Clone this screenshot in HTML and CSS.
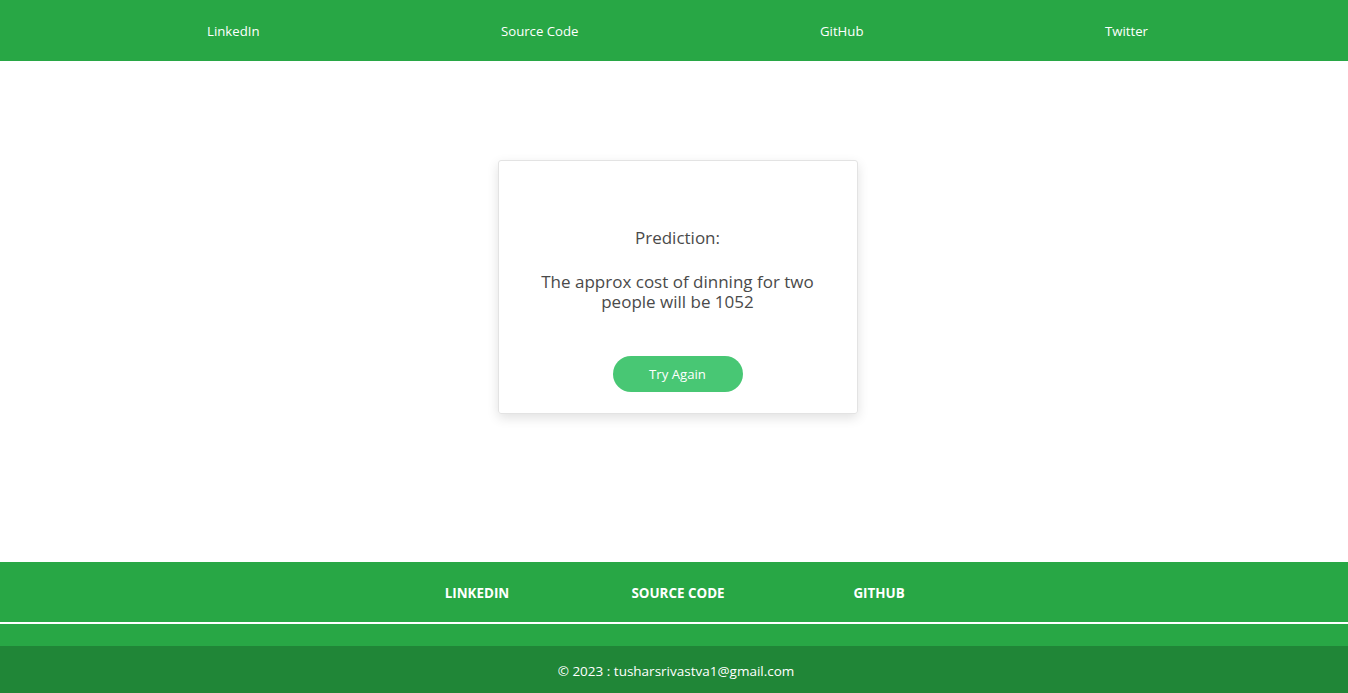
FILE: index.html
```html
<!DOCTYPE html>
<html lang="en">
<head>
<meta charset="utf-8">
<title>Prediction</title>
<link rel="stylesheet" href="styles.css">
</head>
<body>
<header class="topbar">
  <nav class="topnav">
    <a href="#" class="topnav-link">LinkedIn</a>
    <a href="#" class="topnav-link">Source Code</a>
    <a href="#" class="topnav-link">GitHub</a>
    <a href="#" class="topnav-link">Twitter</a>
  </nav>
</header>
<main class="main">
  <section class="card">
    <h2 class="card-title">Prediction:</h2>
    <p class="card-text">The approx cost of dinning for two people will be 1052</p>
    <a href="#" class="btn">Try Again</a>
  </section>
</main>
<footer class="footer">
  <div class="footer-links">
    <a href="#" class="footer-link">LINKEDIN</a>
    <a href="#" class="footer-link">SOURCE CODE</a>
    <a href="#" class="footer-link">GITHUB</a>
  </div>
  <hr class="footer-rule">
  <div class="footer-spacer"></div>
  <div class="copyright">© 2023 : tusharsrivastva1@gmail.com</div>
</footer>
</body>
</html>
```
FILE: styles.css
```css
* { box-sizing: border-box; }
html, body { margin: 0; padding: 0; }
body {
  font-family: "Open Sans", "Noto Sans", "Liberation Sans", sans-serif;
  background: #fff;
  color: #4a4a4a;
}
a { text-decoration: none; }

.topbar {
  background: #28a745;
  height: 61px;
  display: flex;
  align-items: center;
}
.topnav {
  flex: 1;
  display: flex;
  justify-content: space-between;
  padding: 1px 200px 0 207px;
}
.topnav-link {
  color: #fff;
  font-size: 13.2px;
}

.main {
  height: 501px;
  display: flex;
  justify-content: center;
  padding: 99px 0 0 7px;
}
.card {
  width: 360px;
  height: 254px;
  border: 1px solid #e3e3e3;
  border-radius: 3px;
  box-shadow: 0 4px 12px rgba(0, 0, 0, 0.12);
  display: flex;
  flex-direction: column;
  align-items: center;
  padding: 64px 30px 0;
  text-align: center;
}
.card-title {
  margin: 0;
  font-size: 17px;
  font-weight: 400;
  line-height: 26px;
}
.card-text {
  margin: 21px 0 0;
  font-size: 17px;
  line-height: 20px;
}
.btn {
  margin-top: 44px;
  width: 130px;
  height: 36px;
  border-radius: 18px;
  background: #48c774;
  color: #fff;
  font-size: 13.2px;
  display: flex;
  align-items: center;
  justify-content: center;
}

.footer {
  background: #28a745;
}
.footer-links {
  height: 60px;
  display: grid;
  grid-template-columns: repeat(3, 201px);
  justify-content: center;
  align-items: center;
  padding: 1px 0 0 8px;
}
.footer-link {
  color: #fff;
  font-size: 13.4px;
  font-weight: 700;
  text-align: center;
}
.footer-rule {
  margin: 0;
  border: 0;
  height: 2px;
  background: #fff;
}
.footer-spacer { height: 22px; }
.copyright {
  background: #208637;
  height: 47px;
  display: flex;
  align-items: center;
  justify-content: center;
  padding: 2px 0 0 4px;
  color: #fff;
  font-size: 13.5px;
}
```
